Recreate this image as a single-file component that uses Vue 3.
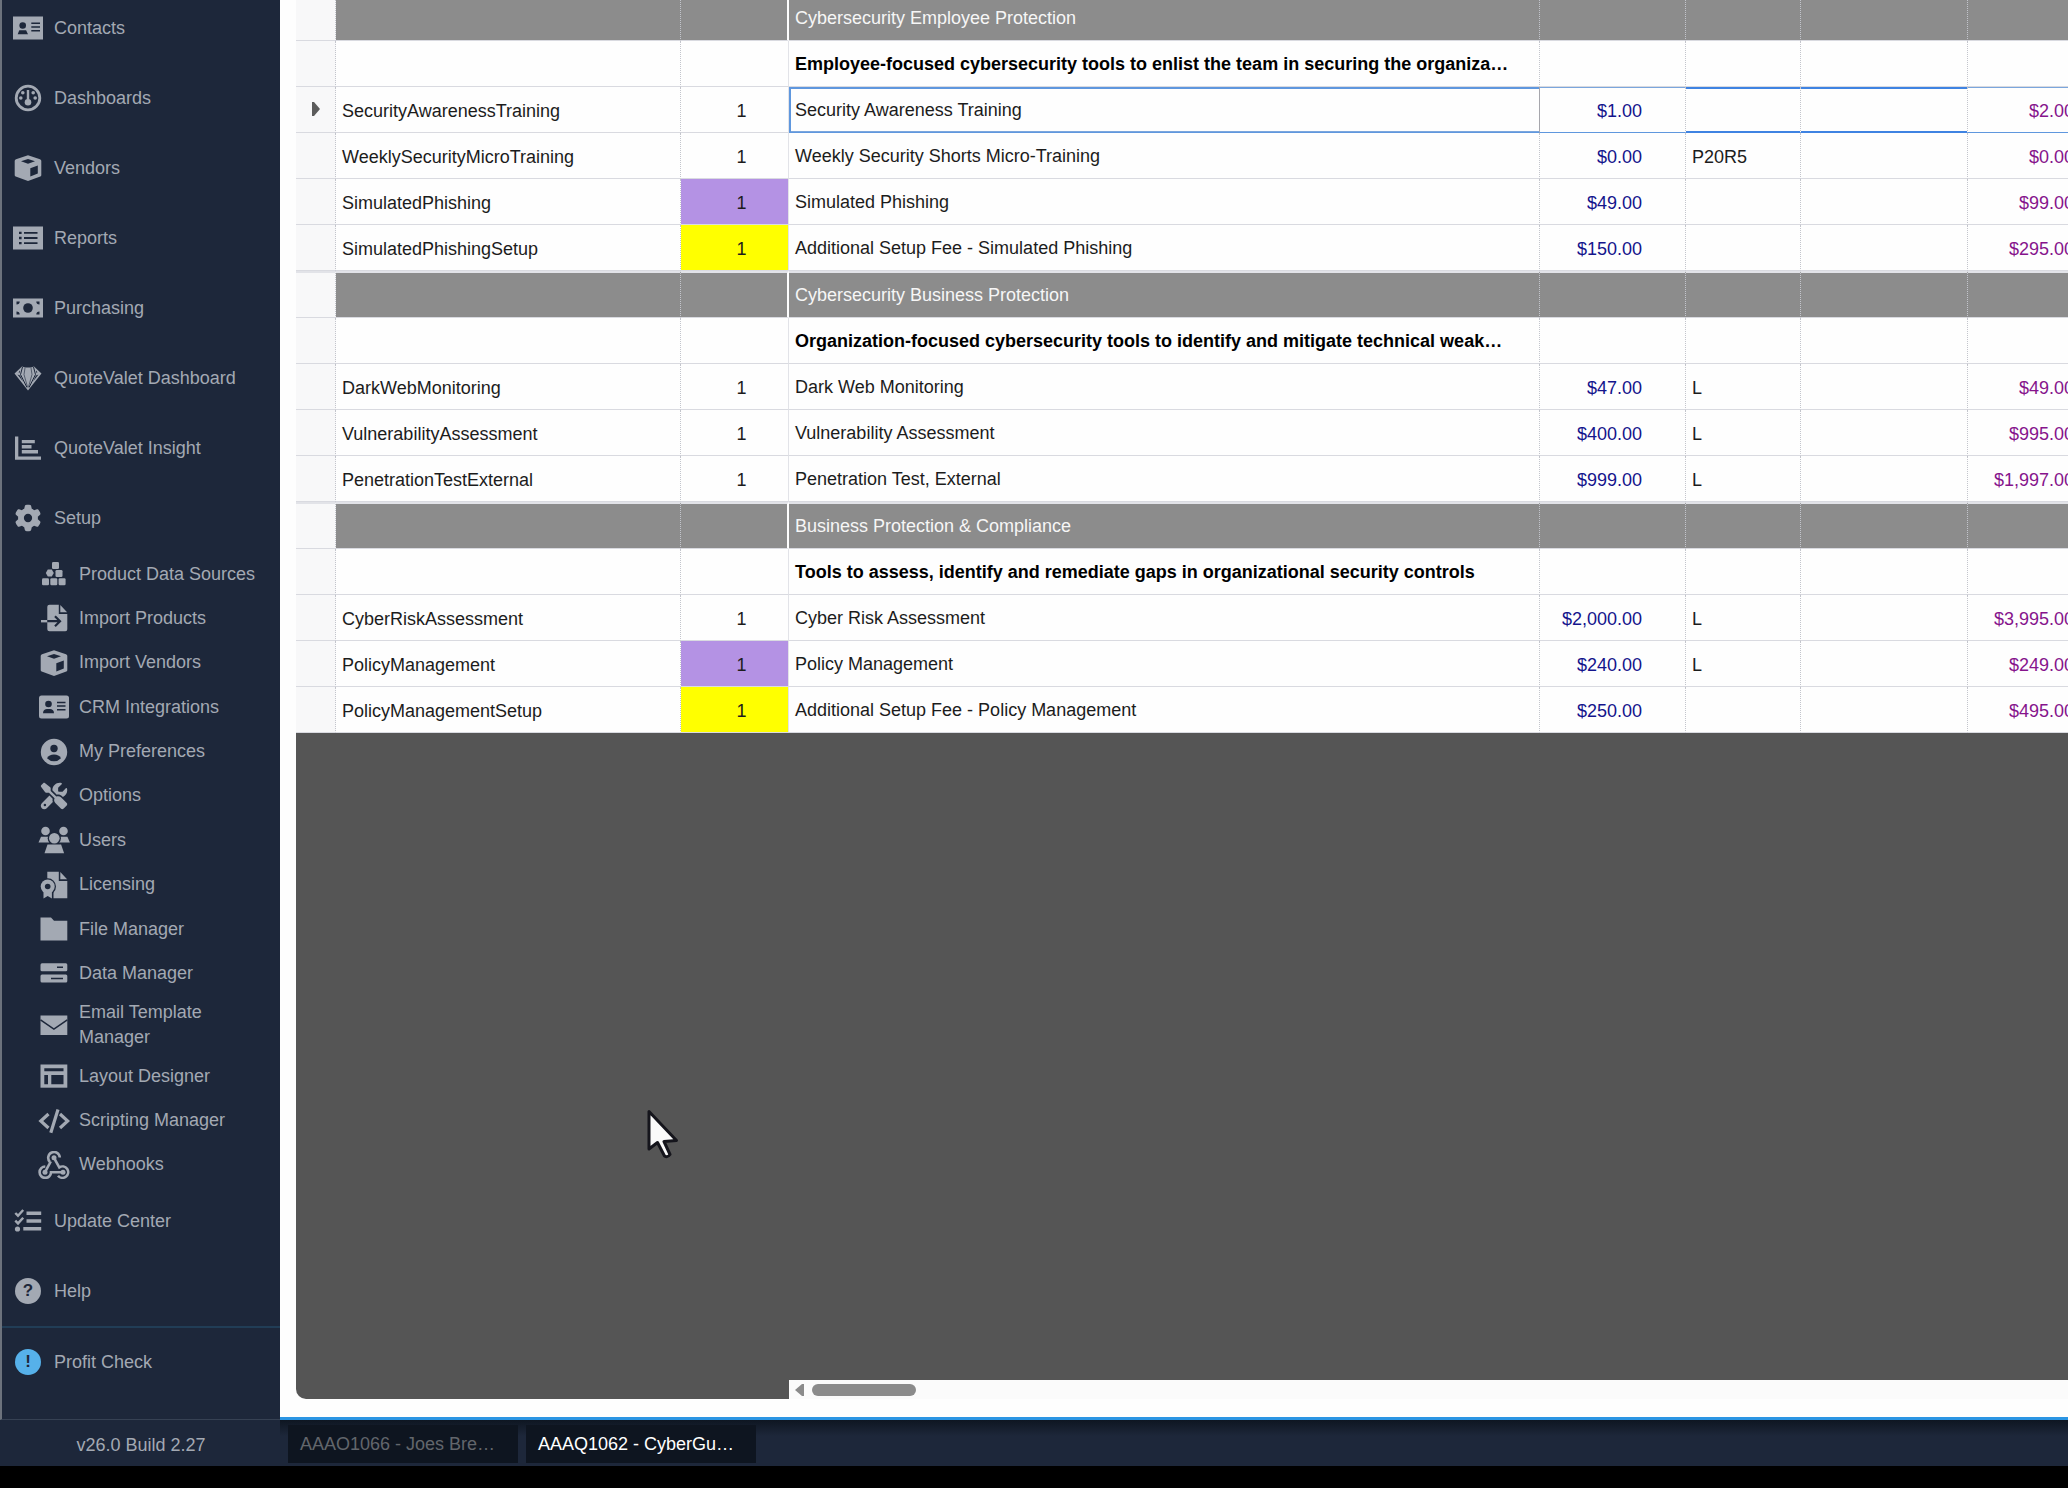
<script setup>
import { ref } from 'vue'

const mainNav = [
  { label: 'Contacts', icon: 'contacts' },
  { label: 'Dashboards', icon: 'gauge' },
  { label: 'Vendors', icon: 'cube' },
  { label: 'Reports', icon: 'list' },
  { label: 'Purchasing', icon: 'money' },
  { label: 'QuoteValet Dashboard', icon: 'gem' },
  { label: 'QuoteValet Insight', icon: 'chart' },
  { label: 'Setup', icon: 'gear' }
]

const setupNav = [
  { label: 'Product Data Sources', icon: 'cubes' },
  { label: 'Import Products', icon: 'import' },
  { label: 'Import Vendors', icon: 'cube' },
  { label: 'CRM Integrations', icon: 'card' },
  { label: 'My Preferences', icon: 'user' },
  { label: 'Options', icon: 'tools' },
  { label: 'Users', icon: 'users' },
  { label: 'Licensing', icon: 'license' },
  { label: 'File Manager', icon: 'folder' },
  { label: 'Data Manager', icon: 'server' },
  { label: 'Email Template Manager', icon: 'mail', tall: true },
  { label: 'Layout Designer', icon: 'layout' },
  { label: 'Scripting Manager', icon: 'code' },
  { label: 'Webhooks', icon: 'webhook' }
]

const footNav = [
  { label: 'Update Center', icon: 'tasks' },
  { label: 'Help', badge: '?' },
  { label: 'Profit Check', badge: '!', divider: true }
]

const rows = [
  { type: 'group', name: 'Cybersecurity Employee Protection' },
  { type: 'note', name: 'Employee-focused cybersecurity tools to enlist the team in securing the organization' },
  { code: 'SecurityAwarenessTraining', qty: 1, name: 'Security Awareness Training', cost: '$1.00', price: '$2.00', selected: true },
  { code: 'WeeklySecurityMicroTraining', qty: 1, name: 'Weekly Security Shorts Micro-Training', cost: '$0.00', rule: 'P20R5', price: '$0.00' },
  { code: 'SimulatedPhishing', qty: 1, name: 'Simulated Phishing', cost: '$49.00', price: '$99.00', mark: 'purple' },
  { code: 'SimulatedPhishingSetup', qty: 1, name: 'Additional Setup Fee - Simulated Phishing', cost: '$150.00', price: '$295.00', mark: 'yellow' },
  { type: 'group', name: 'Cybersecurity Business Protection' },
  { type: 'note', name: 'Organization-focused cybersecurity tools to identify and mitigate technical weaknesses' },
  { code: 'DarkWebMonitoring', qty: 1, name: 'Dark Web Monitoring', cost: '$47.00', rule: 'L', price: '$49.00' },
  { code: 'VulnerabilityAssessment', qty: 1, name: 'Vulnerability Assessment', cost: '$400.00', rule: 'L', price: '$995.00' },
  { code: 'PenetrationTestExternal', qty: 1, name: 'Penetration Test, External', cost: '$999.00', rule: 'L', price: '$1,997.00' },
  { type: 'group', name: 'Business Protection & Compliance' },
  { type: 'note', name: 'Tools to assess, identify and remediate gaps in organizational security controls' },
  { code: 'CyberRiskAssessment', qty: 1, name: 'Cyber Risk Assessment', cost: '$2,000.00', rule: 'L', price: '$3,995.00' },
  { code: 'PolicyManagement', qty: 1, name: 'Policy Management', cost: '$240.00', rule: 'L', price: '$249.00', mark: 'purple' },
  { code: 'PolicyManagementSetup', qty: 1, name: 'Additional Setup Fee - Policy Management', cost: '$250.00', price: '$495.00', mark: 'yellow' }
]

const tabs = ['AAAO1066 - Joes Bre…', 'AAAQ1062 - CyberGu…']
const activeTab = ref(1)
</script>

<template>
  <div class="app">
    <svg class="sprite" aria-hidden="true">
      <symbol id="i-contacts" viewBox="0 0 32 28">
        <rect x="1" y="2.5" width="30" height="23" />
        <g class="cut">
          <circle cx="10.7" cy="11.5" r="3.3" />
          <path d="M5.7 20.3l1.6-4h6.8l1.9 4z" />
          <path d="M19.3 8.4H28v1.5h-8.7zM19.3 12.2H28v1.5h-8.7zM19.3 16H28v1.5h-8.7z" />
        </g>
      </symbol>
      <symbol id="i-card" viewBox="0 0 32 28">
        <rect x="1" y="2.5" width="30" height="23" rx="2.5" />
        <g class="cut">
          <circle cx="10.5" cy="11" r="3.3" />
          <path d="M5 20.3c0-3 2-4.2 4-4.2h3c2 0 4 1.2 4 4.2z" />
          <path d="M19 8.8h8.5v1.5H19zM19 12.3h8.5v1.5H19zM19 16h8.5v1.5H19z" />
        </g>
      </symbol>
      <symbol id="i-gauge" viewBox="0 0 32 28">
        <circle class="line" cx="16" cy="14" r="11.8" stroke-width="2.8" />
        <path class="line" d="M16 6v11" stroke-width="2.4" />
        <circle cx="16" cy="18.3" r="3.3" />
        <circle cx="10.8" cy="8.8" r="1.8" />
        <circle cx="21.2" cy="8.8" r="1.8" />
        <circle cx="8.8" cy="14" r="1.8" />
        <circle cx="23.2" cy="14" r="1.8" />
      </symbol>
      <symbol id="i-cube" viewBox="0 0 32 28">
        <path d="M16 1.3L28 5.3Q29.3 6 29.3 7v14q0 1-1 1.5L16 27 3.7 22.500q-1-.5-1-1.500V7q0-1 1.300-1.700z" />
        <path class="cut" d="M9 7.200l7-2.300 7 2.300-7 2.500zM18.300 14.200l7.500-2.700v8L18.300 22.500z" />
      </symbol>
      <symbol id="i-list" viewBox="0 0 32 28">
        <rect x="1" y="2.500" width="30" height="23" />
        <path class="cut" d="M7 7.700h2.600v2.400H7zM7 12.800h2.600v2.400H7zM7 17.900h2.600v2.400H7zM12 8h13.500v1.800H12zM12 13.100h13.500v1.800H12zM12 18.200h13.500V20H12z" />
      </symbol>
      <symbol id="i-money" viewBox="0 0 32 28">
        <rect x="1" y="4.500" width="30" height="19" />
        <circle class="cut" cx="16" cy="14" r="4.800" />
        <path class="cut" d="M4.500 7.500h3.200q0 3-3.200 3zM27.500 7.500h-3.200q0 3 3.200 3zM4.500 20.500h3.200q0-3-3.200-3zM27.500 20.500h-3.200q0-3 3.200-3z" />
      </symbol>
      <symbol id="i-gem" viewBox="0 0 32 28">
        <path d="M10 2.500l3 1h6l3-1 7.500 7L16 26.500 2.500 9.500z" />
        <path class="cut-line" d="M10.500 3l-2 7.500L15 23.500M21.500 3l2 7.500L17 23.500" stroke-width="1" />
        <path class="cut-line" d="M13 4l-1 6.500L15.500 23M19 4l1 6.500L16.500 23" stroke-width=".6" />
        <path class="cut" d="M5.500 10.500l2.500 1 3 6zM26.500 10.500l-2.500 1-3 6zM8 6.500l-1.500 2h1.500zM24 6.500l1.500 2H24z" />
      </symbol>
      <symbol id="i-chart" viewBox="0 0 32 28">
        <path d="M3 2.500h3.300v20H29v3.200H3zM9.800 6h13v3.300h-13zM9.800 11.100h9.700v3.300H9.800zM9.800 16.100h16.200v3.300H9.800z" />
      </symbol>
      <symbol id="i-gear" viewBox="-53.500 -15 619 542">
        <path d="M495.900 166.600c3.200 8.700 .5 18.400-6.400 24.600l-43.300 39.400c1.100 8.300 1.700 16.800 1.700 25.400s-.6 17.100-1.700 25.400l43.300 39.400c6.900 6.200 9.600 15.900 6.400 24.600c-4.400 11.900-9.700 23.300-15.800 34.300l-4.700 8.100c-6.600 11-14 21.400-22.100 31.200c-5.900 7.200-15.700 9.600-24.500 6.800l-55.700-17.700c-13.400 10.300-28.200 18.900-44 25.400l-12.500 57.100c-2 9.100-9 16.300-18.200 17.800c-13.800 2.300-28 3.500-42.500 3.500s-28.700-1.200-42.500-3.500c-9.200-1.500-16.200-8.700-18.200-17.800l-12.500-57.100c-15.800-6.500-30.600-15.100-44-25.400L83.100 425.900c-8.800 2.800-18.600 .3-24.500-6.800c-8.100-9.800-15.500-20.200-22.100-31.200l-4.700-8.100c-6.100-11-11.400-22.400-15.800-34.300c-3.200-8.700-.5-18.400 6.400-24.600l43.300-39.400C64.600 273.100 64 264.600 64 256s.6-17.100 1.700-25.400L22.400 191.200c-6.900-6.200-9.600-15.900-6.400-24.600c4.400-11.900 9.700-23.300 15.800-34.300l4.700-8.100c6.600-11 14-21.400 22.100-31.200c5.900-7.200 15.700-9.600 24.500-6.800l55.700 17.700c13.400-10.300 28.200-18.900 44-25.400l12.500-57.100c2-9.100 9-16.300 18.200-17.800C227.300 1.200 241.500 0 256 0s28.700 1.200 42.500 3.500c9.200 1.500 16.200 8.700 18.200 17.800l12.500 57.100c15.800 6.500 30.600 15.100 44 25.400l55.700-17.700c8.800-2.800 18.600-.3 24.500 6.800c8.100 9.800 15.500 20.200 22.100 31.200l4.700 8.100c6.100 11 11.400 22.400 15.800 34.300zM256 336a80 80 0 1 0 0-160 80 80 0 1 0 0 160z" />
      </symbol>
      <symbol id="i-cubes" viewBox="0 0 32 28">
        <rect x="14" y="2" width="7" height="7" rx="1.300" />
        <path d="M9.800 9.500h4l2 3.600-2 3.500h-4l-2-3.500z" />
        <rect x="17.500" y="10" width="7" height="7" rx="1.300" />
        <rect x="4" y="18.300" width="7" height="7" rx="1.300" />
        <rect x="12.300" y="18.300" width="7" height="7" rx="1.300" />
        <rect x="20.600" y="18.300" width="7" height="7" rx="1.300" />
      </symbol>
      <symbol id="i-import" viewBox="0 0 32 28">
        <path d="M11.500 .7h9.300V10h8.500v15.300q0 2-2 2H11.500q-2.200 0-2.200-2V2.700q0-2 2.200-2zM22.300 .9l6.800 7.400h-6.800z" />
        <path d="M3 16h6.300v2.400H3z" />
        <path class="cut-line" d="M9.300 17.200h12.500M17 12.200l5 5-5 5" stroke-width="2.200" />
      </symbol>
      <symbol id="i-user" viewBox="0 0 32 28">
        <circle cx="16" cy="14" r="13.200" />
        <circle class="cut" cx="16" cy="10.500" r="3.700" />
        <path class="cut" d="M9 20.200q2-3.700 7-3.700t7 3.700q-3 3.100-7 3.100t-7-3.100z" />
      </symbol>
      <symbol id="i-tools" viewBox="-53.500 -15 619 542">
        <path d="M78.600 5C69.100-2.400 55.600-1.500 47 7L7 47c-8.500 8.500-9.400 22-2.100 31.600l80 104c4.500 5.900 11.600 9.400 19 9.400h54.100l109 109c-14.700 29-10 65.400 14.300 89.600l112 112c12.500 12.500 32.800 12.500 45.300 0l64-64c12.500-12.500 12.500-32.800 0-45.300l-112-112c-24.200-24.200-60.600-29-89.600-14.300l-109-109V104c0-7.500-3.500-14.500-9.400-19L78.600 5zM19.900 396.100C7.200 408.800 0 426.100 0 444.100C0 481.600 30.400 512 67.900 512c18 0 35.300-7.200 48-19.900L233.700 374.300c-7.800-20.900-9-43.600-3.600-65.100l-61.700-61.700L19.900 396.100zM512 144c0-10.500-1.100-20.700-3.200-30.500c-2.400-11.200-16.100-14.100-24.200-6l-63.900 63.900c-3 3-7.100 4.700-11.300 4.700H352c-8.800 0-16-7.200-16-16V102.600c0-4.200 1.700-8.300 4.700-11.300l63.900-63.900c8.100-8.100 5.200-21.800-6-24.200C388.700 1.100 378.500 0 368 0C288.500 0 224 64.500 224 144l0 .8 85.300 85.300c36-9.100 75.800 .5 104 28.700L429 274.500c49-23 83-72.800 83-130.500zM56 432a24 24 0 1 1 48 0 24 24 0 1 1 -48 0z" />
      </symbol>
      <symbol id="i-users" viewBox="0 0 32 28">
        <circle cx="7.500" cy="5" r="4.300" />
        <circle cx="25.500" cy="5" r="4.300" />
        <path d="M.5 16.500l2.500-5.700h7.500l1 5.700zM31.900 16.500l-2.500-5.700h-7l-1.500 5.700z" />
        <circle class="cut" cx="16.300" cy="12.300" r="6.600" />
        <circle cx="16.300" cy="12.300" r="5.300" />
        <path d="M6.500 27.300l3-8.800h13.600l3 8.800z" />
      </symbol>
      <symbol id="i-license" viewBox="0 0 32 28">
        <path d="M9.300 .7h11.500V10h8.500v17.300h-20zM22.300 .9l6.800 7.400h-6.800z" />
        <circle class="cut" cx="9.700" cy="15.500" r="8.300" />
        <path class="cut" d="M4.500 20h11v8h-11z" />
        <path d="M5.500 20h8.400v7.400l-4.200-2.400-4.200 2.400z" />
        <circle cx="9.700" cy="15.500" r="7" />
        <circle class="cut" cx="9.700" cy="15.500" r="2.800" />
      </symbol>
      <symbol id="i-folder" viewBox="0 0 32 28">
        <path d="M2.500 2.500h10.500l3 3.300h13.300v19.700H2.500z" />
      </symbol>
      <symbol id="i-server" viewBox="0 0 32 28">
        <rect x="2.500" y="4.300" width="26.800" height="8" rx="1.500" />
        <rect x="2.500" y="15.500" width="26.800" height="8" rx="1.500" />
        <path class="cut" d="M19 7.500h6v1.500h-6zM13 18.700h12v1.500H13z" />
      </symbol>
      <symbol id="i-mail" viewBox="0 0 32 28">
        <rect x="2.500" y="4.500" width="26.800" height="19.500" />
        <path class="cut-line" d="M2.500 8.800l13.400 9.400 13.400-9.400" stroke-width="1.500" />
      </symbol>
      <symbol id="i-layout" viewBox="0 0 32 28">
        <rect x="2.500" y="2.500" width="26.800" height="23.200" />
        <path class="cut" d="M6.300 6.300h19.200v3H6.300zM6.300 13h3.700v9.200H6.300zM13.300 13h12.200v9.200H13.300z" />
      </symbol>
      <symbol id="i-code" viewBox="0 0 32 28">
        <path class="line" d="M10.500 7L2.800 14l7.700 7M22 7l7.700 7-7.700 7M20 2.500L12.800 25.800" stroke-width="3.200" />
      </symbol>
      <symbol id="i-webhook" viewBox="0 0 32 28">
        <g class="line" stroke-width="2.600">
          <path d="M11.800 10.800A5.800 5.800 0 1 1 21.800 6.500" />
          <path d="M16 6.800l5.300 9.600a5.700 5.700 0 1 1-1.300 8.300" />
          <path d="M12.800 10.500L7 21.200" />
          <path d="M7.300 15.500a5.700 5.700 0 1 0 5.700 5.700h12" />
        </g>
        <circle cx="16" cy="6.800" r="2.500" />
        <circle cx="7" cy="21.200" r="2.500" />
        <circle cx="25" cy="21.200" r="2.500" />
      </symbol>
      <symbol id="i-tasks" viewBox="0 0 32 28">
        <path d="M14.500 4.500h14.700v3.500H14.500zM14.500 12.200h14.700v3.500H14.500zM11.300 20h17.900v3.500H11.300z" />
        <path class="line" d="M3.300 6l2.700 2.700L11.200 3M3.300 13.700L6 16.400l5.200-5.700" stroke-width="2.400" />
        <circle cx="5.500" cy="22" r="2.600" />
      </symbol>
    </svg>

    <div class="body">
      <nav class="sidebar">
        <a v-for="item in mainNav" :key="item.label" href="#" class="nav-item">
          <svg class="icon" aria-hidden="true"><use :href="'#i-' + item.icon" /></svg>
          <span>{{ item.label }}</span>
        </a>
        <div class="subnav">
          <a
            v-for="item in setupNav"
            :key="item.label"
            href="#"
            class="nav-item sub"
            :class="{ tall: item.tall }"
          >
            <svg class="icon" aria-hidden="true"><use :href="'#i-' + item.icon" /></svg>
            <span>{{ item.label }}</span>
          </a>
        </div>
        <a
          v-for="item in footNav"
          :key="item.label"
          href="#"
          class="nav-item"
          :class="{ divider: item.divider }"
        >
          <span v-if="item.badge" class="badge" aria-hidden="true">{{ item.badge }}</span>
          <svg v-else class="icon" aria-hidden="true"><use :href="'#i-' + item.icon" /></svg>
          <span>{{ item.label }}</span>
        </a>
      </nav>

      <main class="content">
        <div class="grid">
          <table class="quote">
            <colgroup>
              <col class="c-mark" />
              <col class="c-code" />
              <col class="c-qty" />
              <col />
              <col class="c-cost" />
              <col class="c-rule" />
              <col class="c-extra" />
              <col class="c-price" />
            </colgroup>
            <tbody>
              <tr v-for="(row, i) in rows" :key="i" :class="[row.type, { selected: row.selected }]">
                <td class="mark">
                  <svg v-if="row.selected" class="pointer" viewBox="0 0 8 14" aria-hidden="true">
                    <path d="M0 0h2l6 7-6 7H0z" />
                  </svg>
                </td>
                <td class="code">{{ row.code }}</td>
                <td class="qty" :class="row.mark">{{ row.qty }}</td>
                <td class="name">{{ row.name }}</td>
                <td class="cost">{{ row.cost }}</td>
                <td class="rule">{{ row.rule }}</td>
                <td class="extra"></td>
                <td class="price">{{ row.price }}</td>
              </tr>
            </tbody>
          </table>
          <div class="scrollbar">
            <button type="button" class="scroll-left" aria-label="Scroll left">
              <svg viewBox="0 0 9 12" aria-hidden="true"><path d="M9 0v12H7L0 6l7-6z" /></svg>
            </button>
            <div class="thumb"></div>
          </div>
          <svg class="cursor" viewBox="0 0 34 52" aria-hidden="true">
            <path d="M4 3.500v37.500l8.500-6.500 7 13.500q3 2 5.500-1.500L19 33.500l12.500-1z" />
          </svg>
        </div>
      </main>
    </div>

    <footer class="statusbar">
      <div class="version">v26.0 Build 2.27</div>
      <div class="tabs">
        <button
          v-for="(tab, i) in tabs"
          :key="tab"
          type="button"
          class="tab"
          :class="{ active: i === activeTab }"
          @click="activeTab = i"
        >{{ tab }}</button>
      </div>
    </footer>
  </div>
</template>

<style>
body {
  background: #000;
}
</style>

<style scoped>
.app {
  display: flex;
  flex-direction: column;
  height: 100vh;
  padding-bottom: 22px;
  box-sizing: border-box;
  overflow: hidden;
  background: #000;
  font-family: "Liberation Sans", Arial, sans-serif;
  font-size: 18px;
}

.sprite {
  position: absolute;
  width: 0;
  height: 0;
}

.cut {
  fill: #1d273a;
}

.cut-line {
  fill: none;
  stroke: #1d273a;
}

.line {
  fill: none;
  stroke: currentColor;
}

.body {
  flex: 1;
  display: flex;
  min-height: 0;
}

/* sidebar */
.sidebar {
  display: flex;
  flex-direction: column;
  width: 280px;
  flex-shrink: 0;
  box-sizing: border-box;
  margin-top: -7px;
  padding-bottom: 23px;
  border-left: 2px solid #6c727c;
  border-bottom: 1px solid #364153;
  background: #1d273a;
}

.nav-item {
  display: flex;
  align-items: center;
  gap: 10px;
  height: 70px;
  padding-left: 10px;
  box-sizing: border-box;
  flex-shrink: 0;
  color: #a3a9b3;
  text-decoration: none;
}

.nav-item.divider {
  border-top: 2px solid #213d56;
}

.nav-item.sub {
  gap: 9px;
  height: 44px;
  padding-left: 36px;
  padding-right: 20px;
}

.nav-item.sub.tall {
  height: 58px;
  line-height: 25px;
}

.subnav {
  flex: 1;
  display: flex;
  flex-direction: column;
  justify-content: space-between;
  margin: -1px 0;
}

.icon {
  width: 32px;
  height: 28px;
  flex-shrink: 0;
  fill: currentColor;
}

.badge {
  width: 26px;
  height: 26px;
  margin: 0 3px;
  border-radius: 50%;
  background: #a3a9b3;
  color: #1d273a;
  font-size: 17px;
  font-weight: 700;
  line-height: 26px;
  text-align: center;
}

.divider .badge {
  background: #56b1ea;
}

/* quote grid */
.content {
  flex: 1;
  display: flex;
  min-width: 0;
  padding: 0 0 18px 16px;
  border-bottom: 3px solid #2b95e3;
  background: #fefefe;
}

.grid {
  flex: 1;
  position: relative;
  display: flex;
  flex-direction: column;
  min-width: 0;
  overflow: hidden;
  border-bottom-left-radius: 10px;
  background: #555;
}

.quote {
  width: calc(100% + 50px);
  margin-top: -5px;
  table-layout: fixed;
  border-collapse: separate;
  border-spacing: 0;
}

.c-mark { width: 40px; }
.c-code { width: 345px; }
.c-qty { width: 108px; }
.c-cost { width: 146px; }
.c-rule { width: 115px; }
.c-extra { width: 167px; }
.c-price { width: 150px; }

td {
  height: 46px;
  padding: 2px 6px 0;
  box-sizing: border-box;
  border-right: 1px dotted #c3c5cc;
  border-bottom: 1px solid #d9dae0;
  background: #fefefe;
  color: #1c1c1c;
  line-height: 20px;
  white-space: nowrap;
}

.mark {
  padding: 0;
  background: #f8f8f9;
  text-align: center;
}

.pointer {
  width: 8px;
  height: 14px;
  fill: #5c5c5c;
}

.qty {
  padding-left: 20px;
  border-right: 1px solid #e2e3e8;
  text-align: center;
}

.qty.purple { background: #b492e4; }
.qty.yellow { background: #ff0; }

.name {
  padding: 0 26px 0 6px;
  overflow: hidden;
  text-overflow: ellipsis;
}

.cost,
.price {
  padding-right: 43px;
  text-align: right;
}

.cost { color: #14148c; }
.price { color: #86148c; }

.group td:not(.mark) {
  background: #8c8c8c;
  color: #f6f6f6;
}

.group .qty {
  border-right: 2px solid #fefefe;
}

.group:not(:first-child) td {
  height: 47px;
  border-top: 2px solid #e2e3e8;
}

.note .name {
  color: #000;
  font-weight: 700;
}

.selected .name,
.selected .cost,
.selected .price {
  border-bottom-color: #5f97de;
  box-shadow: inset 0 1px #7ba6dd;
}

.selected .name {
  border-right: 1px solid #a6a6ac;
  box-shadow: inset 2px 2px #5f97de, inset 0 -1px #7ba6dd;
}

.selected .rule,
.selected .extra {
  border-bottom-color: #3f83e2;
  box-shadow: inset 0 2px #3f83e2, inset 0 -1px #3f83e2;
}

.scrollbar {
  display: flex;
  align-items: center;
  gap: 8px;
  height: 19px;
  margin-top: auto;
  margin-left: 493px;
  padding-left: 6px;
  background: #fbfbfb;
}

.scroll-left {
  display: flex;
  padding: 0;
  border: 0;
  background: none;
}

.scroll-left svg {
  width: 9px;
  height: 12px;
  fill: #8b8b8b;
}

.thumb {
  width: 104px;
  height: 12px;
  border-radius: 6px;
  background: #8b8b8b;
}

.cursor {
  position: absolute;
  left: 349px;
  top: 1108px;
  width: 34px;
  height: 52px;
  fill: #fafafa;
  stroke: #15151c;
  stroke-width: 3;
  stroke-linejoin: round;
}

/* status bar */
.statusbar {
  display: flex;
  height: 46px;
  flex-shrink: 0;
  background: #1d273a;
}

.version {
  width: 280px;
  flex-shrink: 0;
  padding-top: 5px;
  padding-left: 2px;
  box-sizing: border-box;
  color: #a3a9b3;
  line-height: 40px;
  text-align: center;
}

.tabs {
  flex: 1;
  display: flex;
  gap: 8px;
  padding: 5px 8px 3px;
  background: linear-gradient(#0e1622, #1d273a 16px);
}

.tab {
  width: 230px;
  padding: 1px 12px 0;
  border: 0;
  background: #0e1520;
  color: #62666c;
  font: inherit;
  text-align: left;
}

.tab.active {
  color: #fff;
}
</style>
